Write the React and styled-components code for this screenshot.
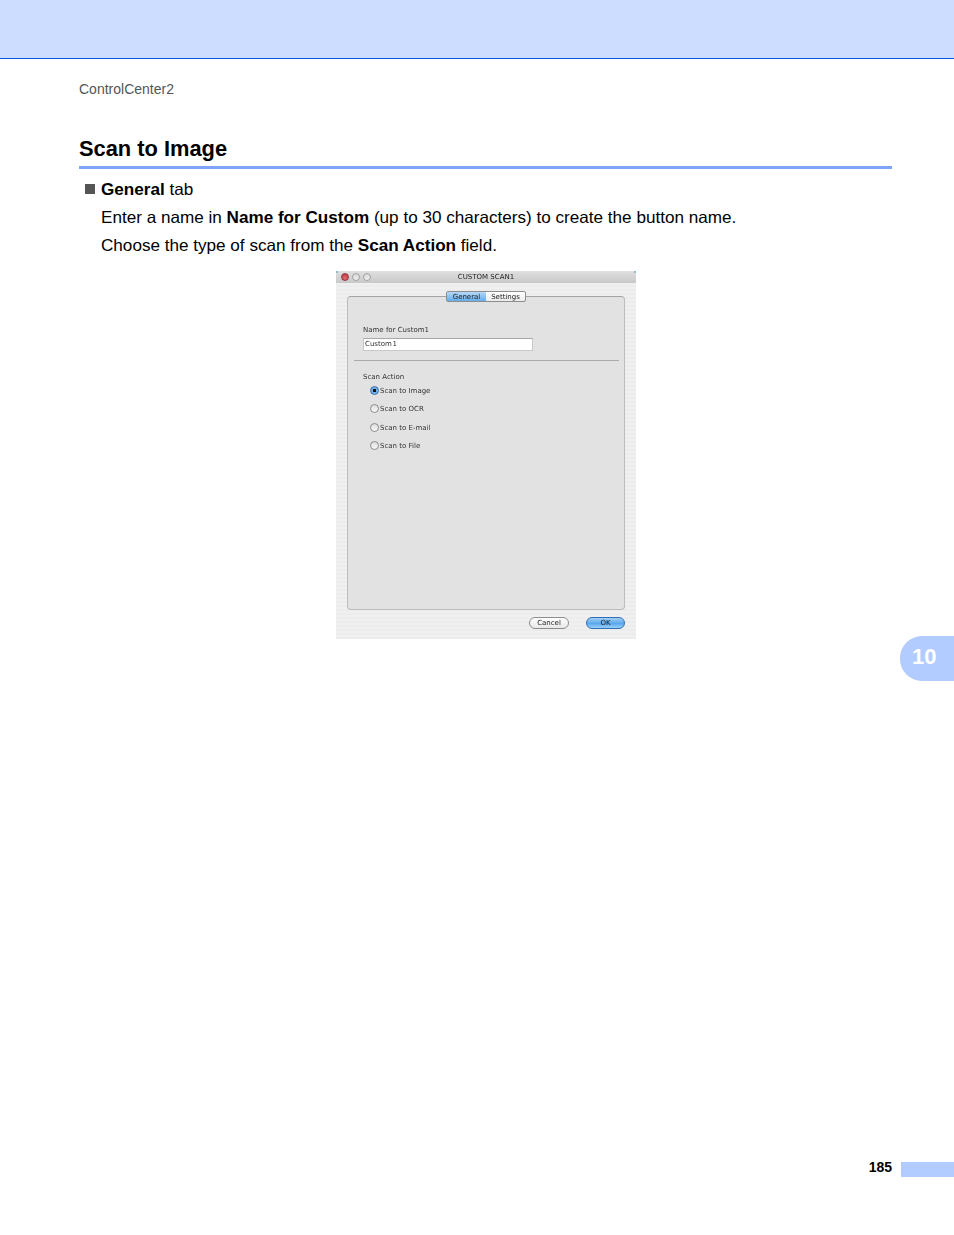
import React from 'react'
import styled, { createGlobalStyle } from 'styled-components'

const GlobalStyle = createGlobalStyle`
  html, body {
    margin: 0;
    padding: 0;
    background: #fff;
  }
`

export default function App() {
  return (
    <Page>
      <GlobalStyle />
      <TopBand />
      <RunningHead>ControlCenter2</RunningHead>
      <Section>
        <Heading>Scan to Image</Heading>
        <BulletRow>
          <Bullet />
          <Line><b>General</b> tab</Line>
        </BulletRow>
        <IndentLine>Enter a name in <b>Name for Custom</b> (up to 30 characters) to create the button name.</IndentLine>
        <IndentLine>Choose the type of scan from the <b>Scan Action</b> field.</IndentLine>
      </Section>
      <Dialog>
        <TitleBar>
          <Lights>
            <Light $red />
            <Light />
            <Light />
          </Lights>
          <Title>CUSTOM SCAN1</Title>
        </TitleBar>
        <Panel>
          <Tabs>
            <Tab $active>General</Tab>
            <Tab>Settings</Tab>
          </Tabs>
          <FieldLabel>Name for Custom1</FieldLabel>
          <TextBox>Custom 1</TextBox>
          <Divider />
          <GroupLabel>Scan Action</GroupLabel>
          <RadioList>
            <RadioRow><Radio $checked />Scan to Image</RadioRow>
            <RadioRow><Radio />Scan to OCR</RadioRow>
            <RadioRow><Radio />Scan to E-mail</RadioRow>
            <RadioRow><Radio />Scan to File</RadioRow>
          </RadioList>
        </Panel>
        <Buttons>
          <Pill>Cancel</Pill>
          <Pill $primary>OK</Pill>
        </Buttons>
      </Dialog>
      <ChapterTab>10</ChapterTab>
      <Footer>
        <PageNumber>185</PageNumber>
        <FooterBlock />
      </Footer>
    </Page>
  )
}

const Page = styled.div`
  width: 954px;
  height: 1235px;
  display: flex;
  flex-direction: column;
  overflow: hidden;
  font-family: 'Liberation Sans', Arial, sans-serif;
  color: #000;
`

const TopBand = styled.div`
  height: 58px;
  flex: none;
  background: #ccddff;
  border-bottom: 1px solid #0a5ae6;
`

const RunningHead = styled.div`
  margin: 22px 0 0 79px;
  font-size: 14px;
  line-height: 17px;
  color: #555;
`

const Section = styled.div`
  margin: 0 62px 0 79px;
`

const Heading = styled.h1`
  margin: 37px 0 0;
  font-size: 21.85px;
  line-height: 28px;
  font-weight: 700;
  padding-bottom: 3px;
  border-bottom: 3px solid #7fa5fb;
`

const BulletRow = styled.div`
  display: flex;
  align-items: center;
  margin-top: 7px;
`

const Bullet = styled.span`
  width: 10px;
  height: 10px;
  margin: -2px 6px 0;
  background: #555;
`

const Line = styled.div`
  font-size: 17.12px;
  line-height: 28px;
`

const IndentLine = styled(Line)`
  margin-left: 22px;
`

const Dialog = styled.div`
  width: 300px;
  height: 368px;
  flex: none;
  margin: 11px 0 0 336px;
  display: flex;
  flex-direction: column;
  font-family: 'DejaVu Sans', sans-serif;
  font-size: 7px;
  color: #333;
  background: repeating-linear-gradient(#f0f0f0 0 2px, #ececec 2px 4px);
`

const TitleBar = styled.div`
  height: 12px;
  flex: none;
  position: relative;
  display: flex;
  align-items: center;
  justify-content: center;
  background: linear-gradient(#e0e0e0, #c8c8c8);

  &::before,
  &::after {
    content: '';
    position: absolute;
    top: 0;
    width: 2px;
    height: 2px;
    background: #8fbccc;
  }
  &::before {
    left: 0;
  }
  &::after {
    right: 0;
  }
`

const Title = styled.span`
  font-size: 7px;
  color: #222;
  filter: blur(0.35px);
`

const Lights = styled.div`
  position: absolute;
  left: 5px;
  top: 2px;
  display: flex;
  gap: 3px;
  filter: blur(0.3px);
`

const Light = styled.span`
  width: 8px;
  height: 8px;
  box-sizing: border-box;
  border-radius: 50%;
  border: 1px solid ${p => (p.$red ? '#8f3a40' : '#a2a2a2')};
  background: ${p => (p.$red ? 'radial-gradient(circle at 50% 70%, #ea6a72, #b8303a)' : 'linear-gradient(#d8d8d8, #efefef)')};
`

const Panel = styled.div`
  width: 278px;
  height: 314px;
  box-sizing: border-box;
  flex: none;
  margin: 13px 0 0 11px;
  padding: 0 5px 0 15px;
  display: flex;
  flex-direction: column;
  background: #e2e2e2;
  border: 1px solid #bcbcbc;
  border-top-color: #a4a4a4;
  border-radius: 4px;
`

const Tabs = styled.div`
  align-self: center;
  margin: -6px 0 0 -10px;
  height: 9px;
  display: flex;
  border: 1px solid #8d8d8d;
  border-radius: 2px;
  background: linear-gradient(#ffffff, #ececec);
  filter: blur(0.3px);
`

const Tab = styled.span`
  width: 39px;
  display: flex;
  align-items: center;
  justify-content: center;
  font-size: 7px;
  color: #222;
  background: ${p => (p.$active ? 'linear-gradient(#b5d8f7, #62aeee)' : 'transparent')};
`

const FieldLabel = styled.div`
  margin-top: 18px;
  line-height: 20px;
  height: 20px;
  filter: blur(0.35px);
`

const TextBox = styled.div`
  width: 170px;
  height: 13px;
  box-sizing: border-box;
  margin-top: -2px;
  padding-left: 1px;
  word-spacing: -1.5px;
  line-height: 11px;
  background: #fff;
  border: 1px solid #c8c8c8;
  border-top-color: #a8a8a8;
  filter: blur(0.3px);
`

const Divider = styled.div`
  height: 1px;
  margin: 9px 0 0 -9px;
  background: #aaa;
`

const GroupLabel = styled.div`
  margin-top: 11px;
  line-height: 10px;
  filter: blur(0.35px);
`

const RadioList = styled.div`
  display: flex;
  flex-direction: column;
  gap: 8.3px;
  margin: 4px 0 0 7px;
`

const RadioRow = styled.div`
  display: flex;
  align-items: center;
  height: 10px;
  filter: blur(0.35px);
`

const Radio = styled.span`
  width: 9px;
  height: 9px;
  box-sizing: border-box;
  margin: -1px 1px 0 0;
  border-radius: 50%;
  border: 1px solid ${p => (p.$checked ? '#3a6ea5' : '#8a8a8a')};
  background: ${p => (p.$checked ? 'radial-gradient(circle, #111 0 1.5px, #6fb0ea 2px)' : 'linear-gradient(#dcdcdc, #fafafa)')};
`

const Buttons = styled.div`
  flex: 1;
  display: flex;
  justify-content: flex-end;
  gap: 17px;
  padding: 7px 11px 0 0;
`

const Pill = styled.div`
  width: ${p => (p.$primary ? '39px' : '40px')};
  height: 12px;
  box-sizing: border-box;
  display: flex;
  align-items: center;
  justify-content: center;
  border-radius: 6px;
  border: 1px solid ${p => (p.$primary ? '#2f6fb5' : '#8d8d8d')};
  background: ${p => (p.$primary ? 'linear-gradient(#a5d0f5, #5aa8ee 55%, #9ad0f8)' : 'linear-gradient(#fff, #e8e8e8)')};
  color: #222;
  filter: blur(0.3px);
`

const ChapterTab = styled.div`
  width: 54px;
  height: 45px;
  flex: none;
  align-self: flex-end;
  margin-top: -3px;
  box-sizing: border-box;
  padding: 0 0 3px 12px;
  display: flex;
  align-items: center;
  background: #b3ccff;
  border-radius: 22px 0 0 22px;
  color: #fff;
  font-size: 22px;
  font-weight: 700;
`

const Footer = styled.div`
  margin-top: auto;
  margin-bottom: 58px;
  display: flex;
  align-items: center;
  justify-content: flex-end;
  gap: 9px;
`

const PageNumber = styled.span`
  margin-top: -6px;
  font-size: 14px;
  font-weight: 700;
`

const FooterBlock = styled.span`
  width: 53px;
  height: 15px;
  background: #b3ccff;
`
